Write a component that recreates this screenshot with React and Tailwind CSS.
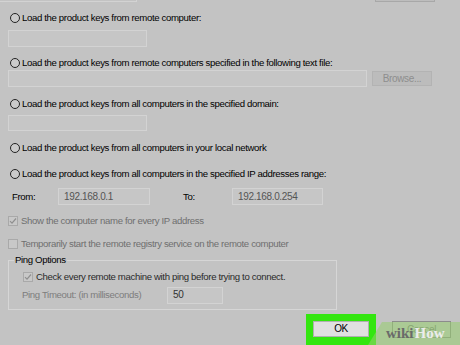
import React from 'react';

function Radio({ label, className }) {
  return (
    <div className={'flex items-center h-3 pl-[10px] ' + className}>
      <span className="w-[10px] h-[10px] rounded-full border border-[#222] bg-[#cbcbcb] shrink-0" />
      <span className="ml-[2px] text-black whitespace-nowrap">{label}</span>
    </div>
  );
}

function Check({ label, checked, className, textClass }) {
  return (
    <div className={'flex items-center h-3 ' + className}>
      <span className="w-[10px] h-[10px] border border-[#a9a9a9] bg-[#c8c8c8] shrink-0 flex items-center justify-center">
        {checked && (
          <svg width="8" height="8" viewBox="0 0 8 8">
            <path d="M1 4.2 L3 6.2 L7 1.5" fill="none" stroke="#8f8f8f" strokeWidth="1.2" />
          </svg>
        )}
      </span>
      <span className={'ml-[3px] whitespace-nowrap ' + textClass}>{label}</span>
    </div>
  );
}

export default function App() {
  return (
    <div className="w-[460px] h-[345px] bg-[#c3c3c3] relative overflow-hidden font-['Liberation_Sans',Arial,sans-serif] text-[9.6px] tracking-[-0.35px] leading-none">
      {/* leftovers of the rows above */}
      <div className="flex h-[3px]">
        <div className="w-[137px] h-[2px] border-b border-r border-[#d3d3d3]" />
        <div className="ml-[238px] w-[60px] h-[2px] border-b border-x border-[#a8a8a8] bg-[#bdbdbd]" />
      </div>

      <Radio label="Load the product keys from remote computer:" className="mt-[9px]" />
      <div className="ml-[8px] mt-[6px] w-[139px] h-[17px] border border-[#d3d3d3] bg-[#c6c6c6]" />

      <Radio label="Load the product keys from remote computers specified in the following text file:" className="mt-[10px]" />
      <div className="flex mt-[1px]">
        <div className="ml-[8px] w-[359px] h-[17px] border border-[#d3d3d3] bg-[#c6c6c6]" />
        <div className="ml-[5px] mt-[1px] w-[60px] h-[15px] border border-[#b3b3b3] bg-[#bcbcbc] flex items-center justify-center text-[#8e8e8e] text-[10px]">
          Browse...
        </div>
      </div>

      <Radio label="Load the product keys from all computers in the specified domain:" className="mt-[11px]" />
      <div className="ml-[8px] mt-[5px] w-[139px] h-[16px] border border-[#d3d3d3] bg-[#c6c6c6]" />

      <Radio label="Load the product keys from all computers in your local network" className="mt-[11px]" />
      <Radio label="Load the product keys from all computers in the specified IP addresses range:" className="mt-[14px]" />

      <div className="flex items-center mt-[8px] pl-[12px] h-[17px]">
        <span className="w-[46px] text-black">From:</span>
        <div className="w-[92px] h-[17px] border border-[#d3d3d3] bg-[#c6c6c6] flex items-center pl-[5px] text-[#555] text-[10px]">
          192.168.0.1
        </div>
        <span className="ml-[33px] w-[49px] text-black">To:</span>
        <div className="w-[91px] h-[17px] border border-[#d3d3d3] bg-[#c6c6c6] flex items-center pl-[5px] text-[#555] text-[10px]">
          192.168.0.254
        </div>
      </div>

      <Check
        label="Show the computer name for every IP address"
        checked
        className="mt-[10px] pl-[8px]"
        textClass="text-[#6f6f6f]"
      />
      <Check
        label="Temporarily start the remote registry service on the remote computer"
        className="mt-[11px] pl-[8px]"
        textClass="text-[#6f6f6f]"
      />

      {/* Ping Options group */}
      <div className="ml-[8px] mt-[10px] w-[329px] h-[50px] border border-[#d6d6d6]">
        <div className="-mt-[6px] ml-[5px] w-fit px-[1px] bg-[#c3c3c3] text-black">Ping Options</div>
        <Check
          label="Check every remote machine with ping before trying to connect."
          checked
          className="mt-[6px] pl-[14px]"
          textClass="text-[#2a2a2a]"
        />
        <div className="flex items-center mt-[4px] pl-[13px] h-[17px]">
          <span className="w-[145px] text-[#7d7d7d]">Ping Timeout: (in milliseconds)</span>
          <div className="w-[56px] h-[17px] border border-[#d3d3d3] bg-[#c6c6c6] flex items-center pl-[5px] text-[#333] text-[10px]">
            50
          </div>
        </div>
      </div>

      {/* buttons */}
      <div className="flex mt-[4px] pl-[306px]">
        <div className="w-[70px] h-[31px] bg-[#33e60f] p-[7px]">
          <div className="w-[56px] h-[16px] bg-[#e0e0e0] border border-[#b0b0b0] flex items-center justify-center text-black text-[10px]">
            OK
          </div>
        </div>
        <div className="ml-[16px] mt-[7px] w-[59px] h-[17px] border border-[#8c8c8c] bg-[#c6c6c6] flex items-center justify-center text-[#777] text-[10px]">
          Cancel
        </div>
      </div>

      {/* wikiHow watermark */}
      <div className="absolute right-0 bottom-0 w-[92px] h-[23px]">
        <svg className="absolute inset-0" width="92" height="23" viewBox="0 0 92 23">
          <polygon points="14,0 92,0 92,23 0,23" fill="rgba(150,205,110,0.55)" />
        </svg>
        <div className="relative flex items-end h-full pl-[18px] pb-[4px] font-['Liberation_Serif',serif] font-bold text-[15px] tracking-normal">
          <span className="text-[#6a6a6a]">wiki</span>
          <span className="ml-[1px] text-[#ececec]">How</span>
        </div>
      </div>
    </div>
  );
}
